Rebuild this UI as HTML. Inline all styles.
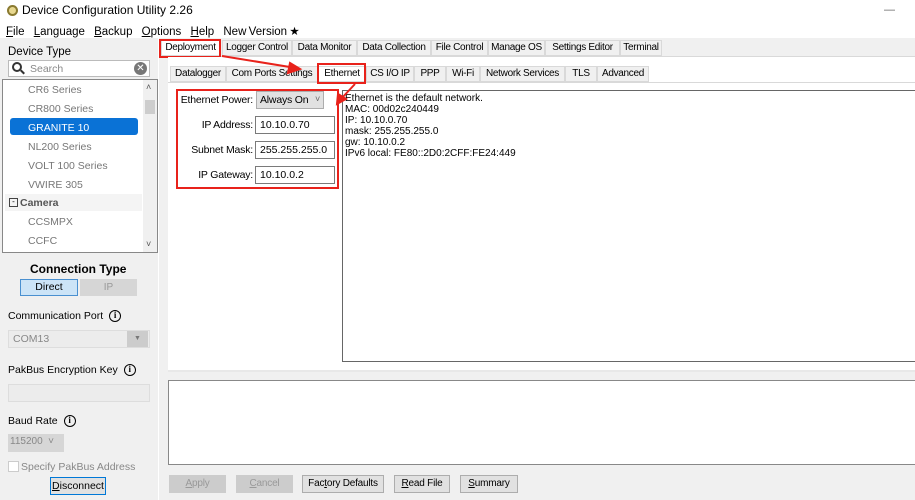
<!DOCTYPE html>
<html><head><style>
*{box-sizing:border-box;margin:0;padding:0}
body{width:915px;height:500px;overflow:hidden;background:#f0f0f0;font-family:"Liberation Sans",sans-serif;font-size:11px;color:#000;position:relative}
.a{position:absolute;white-space:nowrap}
.tab{position:absolute;height:16px;border:1px solid #d9d9d9;background:#f0f0f0;font-size:10px;letter-spacing:-0.3px;text-align:center;line-height:14px;white-space:nowrap}
.red{position:absolute;border:2px solid #e8221b}
.inp{position:absolute;background:#fff;border:1px solid #7a7a7a;padding:2px 4px;font-size:10.5px}
.btn{position:absolute;height:18px;border:1px solid #adadad;background:#e1e1e1;font-size:10px;letter-spacing:-0.2px;text-align:center;line-height:16px}
.li{position:absolute;left:28px;color:#777;font-size:10.5px}
.lbl{position:absolute;right:662px;font-size:10.5px;letter-spacing:-0.2px;white-space:nowrap}
.info{display:inline-block;width:12px;height:12px;border:1.5px solid #000;border-radius:50%;font-size:9px;line-height:9px;text-align:center;font-weight:bold;font-family:"Liberation Serif",serif;vertical-align:middle;margin-left:6px}
</style></head><body>
<div class="a" style="left:0;top:0;width:915px;height:38px;background:#fff"></div>
<div class="a" style="left:7px;top:5px;width:11px;height:11px;border-radius:50%;border:2px solid #8a7a30;background:#e8d890"></div>
<div class="a" style="left:22px;top:3px;font-size:12px">Device Configuration Utility 2.26</div>
<div class="a" style="left:884px;top:4px;color:#666">—</div>
<div class="a" style="left:6px;top:24px;font-size:11.5px;word-spacing:6px"><u>F</u>ile <u>L</u>anguage <u>B</u>ackup <u>O</u>ptions <u>H</u>elp New&#8239;Version&#8239;★</div>

<div class="a" style="left:8px;top:46px;font-size:11.5px">Device Type</div>
<div class="a" style="left:8px;top:60px;width:142px;height:17px;background:#fff;border:1px solid #bbb"></div>
<div class="a" style="left:12px;top:62px;width:10px;height:10px;border:2px solid #333;border-radius:50%;background:#fff"></div>
<div class="a" style="left:20px;top:71px;width:5px;height:2px;background:#333;transform:rotate(45deg)"></div>
<div class="a" style="left:30px;top:63px;color:#888;font-size:10.5px">Search</div>
<div class="a" style="left:134px;top:62px;width:13px;height:13px;border-radius:50%;background:#777;color:#fff;font-size:10px;text-align:center;line-height:13px">✕</div>
<div class="a" style="left:2px;top:79px;width:156px;height:174px;background:#fff;border:1px solid #888"></div>
<div class="a" style="left:143px;top:80px;width:14px;height:172px;background:#f0f0f0"></div>
<div class="a" style="left:145px;top:100px;width:10px;height:14px;background:#cdcdcd"></div>
<div class="a" style="left:146px;top:82px;font-size:9px;color:#555">˄</div>
<div class="a" style="left:146px;top:239px;font-size:9px;color:#555">˅</div>
<div class="li" style="top:84px">CR6 Series</div>
<div class="li" style="top:103px">CR800 Series</div>
<div class="a" style="left:10px;top:118px;width:128px;height:17px;background:#0a72d6;border-radius:3px"></div>
<div class="li" style="top:122px;color:#fff">GRANITE 10</div>
<div class="li" style="top:141px">NL200 Series</div>
<div class="li" style="top:160px">VOLT 100 Series</div>
<div class="li" style="top:179px">VWIRE 305</div>
<div class="a" style="left:5px;top:194px;width:137px;height:17px;background:#f4f4f4"></div>
<div class="a" style="left:9px;top:198px;width:9px;height:9px;border:1px solid #444;font-size:8px;line-height:6px;text-align:center">-</div>
<div class="a" style="left:20px;top:197px;color:#555;font-weight:bold;font-size:10.5px">Camera</div>
<div class="li" style="top:216px">CCSMPX</div>
<div class="li" style="top:235px">CCFC</div>

<div class="a" style="left:30px;top:262px;font-weight:bold;font-size:12px">Connection Type</div>
<div class="a" style="left:20px;top:279px;width:58px;height:17px;background:#cce4f7;border:1px solid #4a90d0;text-align:center;line-height:15px;font-size:10.5px">Direct</div>
<div class="a" style="left:80px;top:279px;width:57px;height:17px;background:#d6d6d6;text-align:center;line-height:17px;color:#999;font-size:10px">IP</div>
<div class="a" style="left:8px;top:310px;font-size:10.5px">Communication Port<span class="info">i</span></div>
<div class="a" style="left:8px;top:330px;width:142px;height:18px;background:#ececec;border:1px solid #ddd;color:#888;padding:2px 4px;font-size:10.5px">COM13</div>
<div class="a" style="left:127px;top:331px;width:21px;height:16px;background:#ccc;color:#777;font-size:7px;text-align:center;line-height:16px">▼</div>
<div class="a" style="left:8px;top:364px;font-size:10.5px">PakBus Encryption Key<span class="info">i</span></div>
<div class="a" style="left:8px;top:384px;width:142px;height:18px;background:#ececec;border:1px solid #ddd"></div>
<div class="a" style="left:8px;top:415px;font-size:10.5px">Baud Rate<span class="info">i</span></div>
<div class="a" style="left:8px;top:434px;width:56px;height:18px;background:#d6d6d6;color:#888;padding:2px 2px;font-size:10px">115200 &nbsp;˅</div>
<div class="a" style="left:8px;top:461px;width:11px;height:11px;background:#fff;border:1px solid #ccc"></div>
<div class="a" style="left:21px;top:461px;color:#888;font-size:10.5px">Specify PakBus Address</div>
<div class="a" style="left:50px;top:477px;width:56px;height:18px;border:1px solid #0078d7;background:#e1e1e1;text-align:center;line-height:16px;font-size:10.5px"><u>D</u>isconnect</div>

<div class="a" style="left:158px;top:38px;width:1px;height:462px;background:#fff"></div>
<div class="a" style="left:160px;top:56px;width:755px;height:1px;background:#d9d9d9"></div>
<div class="tab" style="left:161px;top:40px;width:59px;background:#fff">Deployment</div>
<div class="tab" style="left:222px;top:40px;width:70px">Logger Control</div>
<div class="tab" style="left:292px;top:40px;width:65px">Data Monitor</div>
<div class="tab" style="left:357px;top:40px;width:74px">Data Collection</div>
<div class="tab" style="left:431px;top:40px;width:57px">File Control</div>
<div class="tab" style="left:488px;top:40px;width:57px">Manage OS</div>
<div class="tab" style="left:545px;top:40px;width:75px">Settings Editor</div>
<div class="tab" style="left:620px;top:40px;width:42px">Terminal</div>
<div class="red" style="left:159px;top:39px;width:62px;height:19px"></div>

<div class="a" style="left:168px;top:57px;width:747px;height:315px;background:#fff"></div>
<div class="a" style="left:168px;top:82px;width:747px;height:1px;background:#d9d9d9"></div>
<div class="tab" style="left:170px;top:66px;width:56px">Datalogger</div>
<div class="tab" style="left:226px;top:66px;width:92px">Com Ports Settings</div>
<div class="tab" style="left:318px;top:66px;width:48px;background:#fff">Ethernet</div>
<div class="tab" style="left:366px;top:66px;width:48px">CS I/O IP</div>
<div class="tab" style="left:414px;top:66px;width:32px">PPP</div>
<div class="tab" style="left:446px;top:66px;width:34px">Wi-Fi</div>
<div class="tab" style="left:480px;top:66px;width:85px">Network Services</div>
<div class="tab" style="left:565px;top:66px;width:32px">TLS</div>
<div class="tab" style="left:597px;top:66px;width:52px">Advanced</div>
<div class="red" style="left:317px;top:63px;width:49px;height:21px"></div>

<div class="a" style="left:168px;top:370px;width:747px;height:2px;background:#e8e8e8"></div>
<div class="lbl" style="top:94px">Ethernet Power:</div>
<div class="a" style="left:256px;top:91px;width:68px;height:18px;background:#e1e1e1;border:1px solid #adadad;padding:2px 3px;font-size:10.5px;letter-spacing:-0.2px">Always On <span style="float:right;color:#666;font-size:9px">˅</span></div>
<div class="lbl" style="top:119px">IP Address:</div>
<div class="inp" style="left:255px;top:116px;width:80px;height:18px">10.10.0.70</div>
<div class="lbl" style="top:144px">Subnet Mask:</div>
<div class="inp" style="left:255px;top:141px;width:80px;height:18px">255.255.255.0</div>
<div class="lbl" style="top:169px">IP Gateway:</div>
<div class="inp" style="left:255px;top:166px;width:80px;height:18px">10.10.0.2</div>
<div class="red" style="left:176px;top:89px;width:163px;height:100px"></div>

<div class="a" style="left:342px;top:90px;width:573px;height:272px;border:1px solid #666;border-right:none;background:#fff;padding:3px 2px;font-size:10px;line-height:10.9px;white-space:pre">Ethernet is the default network.
MAC: 00d02c240449
IP: 10.10.0.70
mask: 255.255.255.0
gw: 10.10.0.2
IPv6 local: FE80::2D0:2CFF:FE24:449</div>

<svg class="a" style="left:0;top:0" width="915" height="500">
<g stroke="#e8221b" stroke-width="2" fill="#e8221b">
<line x1="222" y1="56" x2="296" y2="68"/><polygon points="300,69 290,63 288,73"/>
<line x1="355" y1="84" x2="340" y2="100"/><polygon points="337,104 338,94 346,99"/>
</g></svg>

<div class="a" style="left:168px;top:380px;width:747px;height:85px;background:#fff;border:1px solid #888;border-right:none"></div>
<div class="btn" style="left:169px;top:475px;width:57px;color:#999;background:#ccc;border-color:#ccc"><u>A</u>pply</div>
<div class="btn" style="left:236px;top:475px;width:57px;color:#999;background:#ccc;border-color:#ccc"><u>C</u>ancel</div>
<div class="btn" style="left:302px;top:475px;width:82px">Fac<u>t</u>ory Defaults</div>
<div class="btn" style="left:394px;top:475px;width:56px"><u>R</u>ead File</div>
<div class="btn" style="left:460px;top:475px;width:58px"><u>S</u>ummary</div>
</body></html>
